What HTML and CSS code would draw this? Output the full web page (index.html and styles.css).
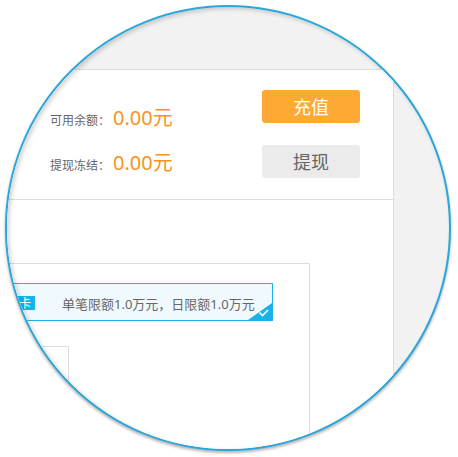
FILE: index.html
```html
<!DOCTYPE html>
<html lang="zh-CN">
<head>
<meta charset="utf-8">
<title>账户余额</title>
<link rel="stylesheet" href="styles.css">
</head>
<body>
<div class="lens">
  <div class="page">
    <div class="panel">
      <div class="balance">
        <div class="amounts">
          <div class="row"><span class="label">可用余额：</span><span class="num">0.00元</span></div>
          <div class="row"><span class="label">提现冻结：</span><span class="num">0.00元</span></div>
        </div>
        <div class="actions">
          <button class="btn btn-primary">充值</button>
          <button class="btn btn-muted">提现</button>
        </div>
      </div>
      <div class="cards">
        <div class="card-list">
          <div class="card selected">
            <span class="badge">卡</span>
            <span class="limit">单笔限额1.0万元，日限额1.0万元</span>
            <svg class="tick" width="24" height="17" viewBox="0 0 24 17">
              <polygon points="0,17 24,17 24,0" fill="#19b3ea"/>
              <polyline points="11.5,9.5 14.5,12.5 20,7" fill="none" stroke="#fff" stroke-width="1.6"/>
            </svg>
          </div>
          <div class="card-next"></div>
        </div>
      </div>
    </div>
  </div>
</div>
</body>
</html>
```

FILE: styles.css
```css
html, body {
  margin: 0;
  padding: 0;
  background: #fff;
}

body {
  font-family: "Noto Sans", "Noto Sans CJK SC", sans-serif;
}

.lens {
  position: relative;
  width: 446px;
  height: 446px;
  box-sizing: border-box;
  margin: 5px;
  border: 2px solid #29a7dc;
  border-radius: 50%;
  overflow: hidden;
  background: #f2f2f2;
  box-shadow: 0 2px 3px rgba(0, 0, 0, 0.3);
}

.lens::after {
  content: "";
  position: absolute;
  inset: 0;
  border-radius: 50%;
  box-shadow: inset 2px 2px 4px rgba(0, 0, 0, 0.18);
  pointer-events: none;
}

.page {
  margin-left: -57px;
  padding-top: 62px;
}

.panel {
  width: 444px;
  box-sizing: border-box;
  background: #fff;
  border: 1px solid #ddd;
}

.balance {
  height: 130px;
  box-sizing: border-box;
  border-bottom: 1px solid #ddd;
  display: flex;
  justify-content: space-between;
}

.amounts {
  padding-left: 99px;
  padding-top: 36px;
}

.row {
  display: flex;
  align-items: baseline;
  height: 45px;
}

.label {
  width: 63px;
  font-family: "Noto Sans CJK SC", sans-serif;
  font-size: 12px;
  line-height: 24px;
  color: #666;
}

.num {
  font-size: 20px;
  line-height: 24px;
  color: #f7931e;
}

.actions {
  display: flex;
  flex-direction: column;
  gap: 22px;
  padding-top: 20px;
  margin-right: 33px;
}

.btn {
  width: 98px;
  height: 33px;
  padding: 0;
  border: none;
  border-radius: 3px;
  font-family: "Noto Sans CJK SC", sans-serif;
  font-size: 18px;
  line-height: 33px;
}

.btn-primary {
  background: #fea934;
  color: #fff;
}

.btn-muted {
  background: #ebebeb;
  color: #666;
}

.cards {
  padding-top: 63px;
  height: 260px;
}

.card-list {
  margin-left: 29px;
  width: 330px;
  height: 260px;
  box-sizing: border-box;
  border: 1px solid #ddd;
  border-bottom: none;
  padding: 19px 36px 0 0;
}

.card {
  position: relative;
  height: 38px;
  box-sizing: border-box;
  border: 1px solid #1db3ec;
  background: #f0f9fe;
  display: flex;
  align-items: center;
  padding-left: 11px;
}

.badge {
  font-family: "Noto Sans CJK SC", sans-serif;
  font-size: 12px;
  line-height: 14px;
  padding: 0 4px 0 26px;
  background: #17b3ea;
  color: #fff;
  margin-top: 2px;
}

.limit {
  margin-left: 27px;
  font-size: 13px;
  color: #666;
  margin-top: 3px;
}

.tick {
  position: absolute;
  right: 0;
  bottom: 0;
  display: block;
}

.card-next {
  margin-top: 25px;
  width: 88px;
  height: 120px;
  box-sizing: border-box;
  border-top: 1px solid #ddd;
  border-right: 1px solid #ddd;
}
```
